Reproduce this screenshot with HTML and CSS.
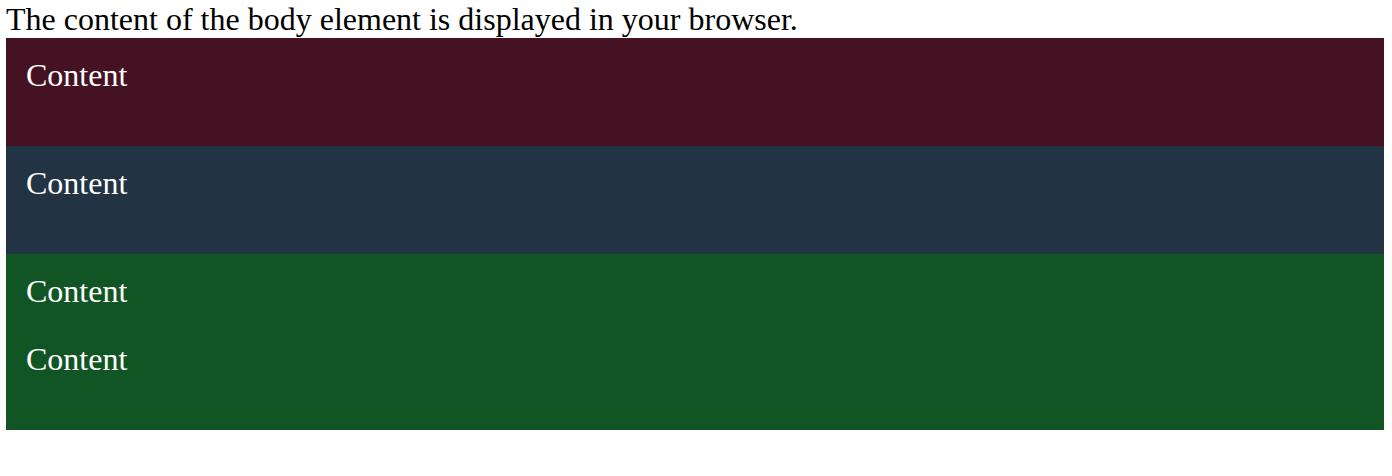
FILE: index.html
```html
<!DOCTYPE html>
<html>
<head>
<meta charset="utf-8">
<link rel="stylesheet" href="styles.css">
</head>
<body>
<div class="intro">The content of the body element is displayed in your browser.</div>
<div class="block block-red"><p class="item">Content</p></div>
<div class="block block-blue"><p class="item">Content</p></div>
<div class="block block-green"><p class="item">Content</p><p class="item">Content</p></div>
</body>
</html>
```
FILE: styles.css
```css
html, body {
  background: #ffffff;
}
body {
  margin: 0 8px 0 6px;
  font-family: "Liberation Serif", "Times New Roman", serif;
  font-size: 32px;
  color: #000000;
}
.intro {
  line-height: 38px;
}
.block {
  padding: 20px 20px 20px 20px;
  color: #ffffff;
}
.item {
  margin: 0 0 33px 0;
  line-height: 35px;
}
.block-red {
  background: #451223;
}
.block-blue {
  background: #223344;
}
.block-green {
  background: #115524;
}
```
